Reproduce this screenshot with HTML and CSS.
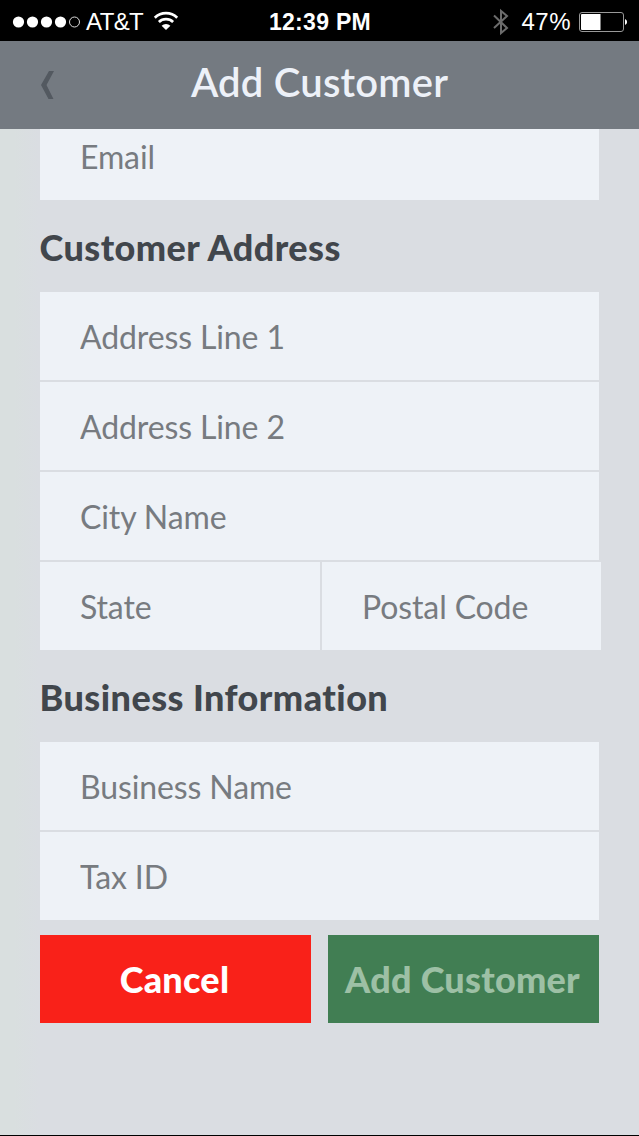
FILE: index.html
```html
<!DOCTYPE html>
<html lang="en">
<head>
  <meta charset="UTF-8" />
  <meta name="viewport" content="width=device-width, initial-scale=1.0"/>
  <title>Add Customer</title>
  <link rel="stylesheet" href="styles.css">
</head>
<body>
  <div class="status-bar">
    <div class="status-left">
      <svg class="signal" width="68" height="12" viewBox="0 0 68 12">
        <circle cx="6.5" cy="6" r="5.6" fill="#fff"/>
        <circle cx="20.5" cy="6" r="5.6" fill="#fff"/>
        <circle cx="34.5" cy="6" r="5.6" fill="#fff"/>
        <circle cx="48.5" cy="6" r="5.6" fill="#fff"/>
        <circle cx="62.5" cy="6" r="5" fill="none" stroke="#ddd" stroke-width="1"/>
      </svg>
      <span class="carrier">AT&amp;T</span>
      <svg class="wifi" width="26" height="20" viewBox="0 0 26 20">
        <path d="M1.8 6.7a16.2 16.2 0 0 1 22.4 0M5.9 11a10.3 10.3 0 0 1 14.2 0" fill="none" stroke="#fff" stroke-width="2.7"/>
        <path d="M8.6 14.8a6.2 6.2 0 0 1 8.8 0L13 19z" fill="#fff"/>
      </svg>
    </div>
    <span class="clock">12:39 PM</span>
    <div class="status-right">
      <svg class="bluetooth" width="18" height="28" viewBox="0 0 18 28">
        <path d="M2 7.5L15 20L9 25V3L15 8L2 20" fill="none" stroke="#6c6c6c" stroke-width="2"/>
      </svg>
      <span class="percent">47%</span>
      <svg class="battery" width="50" height="20" viewBox="0 0 50 20">
        <rect x="0.5" y="0.5" width="44" height="19" rx="2.5" fill="none" stroke="#999" stroke-width="1"/>
        <path d="M3 2h18.500v16H3a1 1 0 0 1-1-1V3a1 1 0 0 1 1-1z" fill="#fff"/>
        <path d="M46 7a3.2 3.2 0 0 1 0 6z" fill="#fff"/>
      </svg>
    </div>
  </div>

  <header class="nav-bar">
    <button class="back" aria-label="Back">
      <svg width="16" height="30" viewBox="0 0 16 30">
        <path d="M9 1h5L6.500 15l7 14H8.500L1 15z" fill="#535960"/>
      </svg>
    </button>
    <h1>Add Customer</h1>
  </header>

  <main class="content">
    <form class="customer-form">
      <div class="fields">
        <input type="email" placeholder="Email" />
      </div>

      <h2>Customer Address</h2>
      <div class="fields">
        <input type="text" placeholder="Address Line 1" />
        <input type="text" placeholder="Address Line 2" />
        <input type="text" placeholder="City Name" />
        <div class="field-row">
          <input type="text" placeholder="State" />
          <input type="text" placeholder="Postal Code" />
        </div>
      </div>

      <h2>Business Information</h2>
      <div class="fields">
        <input type="text" placeholder="Business Name" />
        <input type="text" placeholder="Tax ID" />
      </div>

      <div class="actions">
        <button type="button" class="btn cancel">Cancel</button>
        <button type="submit" class="btn add" disabled>Add Customer</button>
      </div>
    </form>
  </main>
</body>
</html>
```
FILE: styles.css
```css
* { margin: 0; padding: 0; box-sizing: border-box; }

body {
  display: flex;
  flex-direction: column;
  height: 1136px;
  overflow: hidden;
  background: #dadde2;
  font-family: Lato, sans-serif;
  color: #41464c;
}

/* Status bar */
.status-bar {
  display: grid;
  grid-template-columns: 1fr auto 1fr;
  align-items: center;
  height: 41px;
  padding: 2px 11px 0 12px;
  background: #000;
  color: #fff;
  font-family: "Liberation Sans", Arial, sans-serif;
  font-size: 24px;
}
.status-left, .status-right { display: flex; align-items: center; }
.status-right { justify-content: flex-end; }
.carrier { margin: 0 10px 0 6px; letter-spacing: -0.6px; }
.wifi { margin-top: -2px; }
.clock { padding-top: 1px; font-weight: bold; font-size: 23px; letter-spacing: 0.3px; }
.bluetooth { margin-right: 11px; }
.percent { margin-right: 8px; letter-spacing: 0.5px; }
.battery { margin-right: -1px; }

/* Title bar */
.nav-bar {
  display: grid;
  grid-template-columns: 80px 1fr 80px;
  align-items: center;
  height: 88px;
  background: #747a81;
  color: #edf1f8;
}
.nav-bar h1 {
  font-size: 40px;
  font-weight: 600;
  letter-spacing: 0.2px;
  line-height: 48px;
  text-align: center;
  padding-bottom: 6px;
}
.back { display: flex; padding-left: 40px; border: none; background: none; }

/* Scrolled form area */
.content {
  flex: 1;
  overflow: hidden;
  padding: 0 40px;
  background: linear-gradient(to right, #d9dfdf 14px, #dadde2 40px);
  border-bottom: 1px solid #000;
}
.customer-form { margin-top: -17px; }

.fields { display: flex; flex-direction: column; gap: 2px; }
input {
  width: 100%;
  height: 88px;
  padding: 0 40px;
  border: none;
  border-radius: 0;
  background: #eef2f7;
  font-family: inherit;
  font-size: 32px;
  letter-spacing: -0.12px;
  color: #41464c;
}
input::placeholder { color: #777b80; opacity: 1; }

/* The paired fields run 2px past the column */
.field-row {
  display: grid;
  grid-template-columns: 280px 279px;
  gap: 2px;
}

h2 {
  height: 92px;
  font-size: 36px;
  font-weight: 900;
  letter-spacing: 0.45px;
  line-height: 94px;
  text-indent: -0.5px;
}

/* Buttons */
.actions {
  display: grid;
  grid-template-columns: 1fr 1fr;
  gap: 17px;
  margin-top: 15px;
}
.btn {
  height: 88px;
  padding-right: 2px;
  border: none;
  font-family: inherit;
  font-size: 36px;
  font-weight: 900;
  letter-spacing: 0.25px;
  white-space: nowrap;
}
.cancel { background: #f92119; color: #fff; }
.add { background: #417e53; color: #9dc0a5; }
```
